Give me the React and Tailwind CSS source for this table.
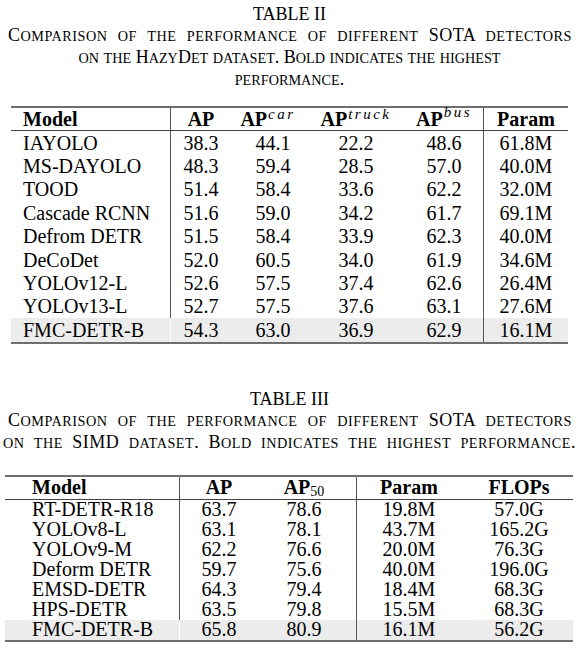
import React from "react";

function SC({ text }) {
  const parts = text.match(/([a-z]+|[^a-z]+)/g) || [];
  return (
    <>
      {parts.map((p, i) =>
        /^[a-z]+$/.test(p) ? (
          <span key={i} className="text-[0.79em]">{p.toUpperCase()}</span>
        ) : (
          <span key={i}>{p}</span>
        )
      )}
    </>
  );
}

const t2 = [
  ["IAYOLO", "38.3", "44.1", "22.2", "48.6", "61.8M"],
  ["MS-DAYOLO", "48.3", "59.4", "28.5", "57.0", "40.0M"],
  ["TOOD", "51.4", "58.4", "33.6", "62.2", "32.0M"],
  ["Cascade RCNN", "51.6", "59.0", "34.2", "61.7", "69.1M"],
  ["Defrom DETR", "51.5", "58.4", "33.9", "62.3", "40.0M"],
  ["DeCoDet", "52.0", "60.5", "34.0", "61.9", "34.6M"],
  ["YOLOv12-L", "52.6", "57.5", "37.4", "62.6", "26.4M"],
  ["YOLOv13-L", "52.7", "57.5", "37.6", "63.1", "27.6M"],
  ["FMC-DETR-B", "54.3", "63.0", "36.9", "62.9", "16.1M"],
];

const t3 = [
  ["RT-DETR-R18", "63.7", "78.6", "19.8M", "57.0G"],
  ["YOLOv8-L", "63.1", "78.1", "43.7M", "165.2G"],
  ["YOLOv9-M", "62.2", "76.6", "20.0M", "76.3G"],
  ["Deform DETR", "59.7", "75.6", "40.0M", "196.0G"],
  ["EMSD-DETR", "64.3", "79.4", "18.4M", "68.3G"],
  ["HPS-DETR", "63.5", "79.8", "15.5M", "68.3G"],
  ["FMC-DETR-B", "65.8", "80.9", "16.1M", "56.2G"],
];

function Sup({ children }) {
  return (
    <span className="relative top-[-7px] ml-[1px] text-[15px] tracking-[2.5px] italic font-normal leading-none">{children}</span>
  );
}

function Table2() {
  return (
    <div className="ml-[11px] w-[557px] text-[20px] leading-[20px]">
      <div className="h-[2px] bg-[#6e6e6e]" />
      <div className="flex h-[22px] items-center font-bold">
        <div className="w-[160px] h-full flex items-center pl-[12px] border-r border-[#555]">Model</div>
        <div className="w-[60px] text-center">AP</div>
        <div className="w-[84px] text-center pr-[10px]">AP<Sup>car</Sup></div>
        <div className="w-[82px] text-center">AP<Sup>truck</Sup></div>
        <div className="w-[87px] h-full flex items-center justify-center pl-[8px] border-r border-[#555]">AP<Sup>bus</Sup></div>
        <div className="w-[84px] text-center">Param</div>
      </div>
      <div className="h-[1px] bg-[#444]" />
      {t2.map((r, i) => {
        const last = i === t2.length - 1;
        return (
          <div key={i} className={"flex h-[23.4px] items-center " + (last ? "bg-[#ececec]" : "")}>
            <div className={"w-[160px] h-full flex items-center pl-[12px] border-r " + (last ? "border-white" : "border-[#555]")}>{r[0]}</div>
            <div className="w-[60px] text-center">{r[1]}</div>
            <div className="w-[84px] text-center">{r[2]}</div>
            <div className="w-[82px] text-center">{r[3]}</div>
            <div className="w-[87px] h-full flex items-center justify-center pl-[8px] border-r border-[#555]">{r[4]}</div>
            <div className="w-[84px] text-center">{r[5]}</div>
          </div>
        );
      })}
      <div className="h-[2px] bg-[#6e6e6e]" />
    </div>
  );
}

function Table3() {
  return (
    <div className="ml-[5px] w-[568px] text-[20px] leading-[19px]">
      <div className="h-[2px] bg-[#6e6e6e]" />
      <div className="flex h-[22px] items-center font-bold">
        <div className="w-[175px] h-full flex items-center pl-[27px] border-r border-[#555]">Model</div>
        <div className="w-[78px] text-center">AP</div>
        <div className="w-[99px] h-full flex items-center justify-center pr-[6px] border-r border-[#555]">
          AP<span className="relative top-[4px] text-[14px] font-normal leading-none">50</span>
        </div>
        <div className="w-[104px] text-center">Param</div>
        <div className="w-[112px] text-center pl-[4px]">FLOPs</div>
      </div>
      <div className="h-[1px] bg-[#444]" />
      {t3.map((r, i) => {
        const last = i === t3.length - 1;
        return (
          <div key={i} className={"flex h-[20px] items-center " + (last ? "bg-[#ececec]" : "")}>
            <div className={"w-[175px] h-full flex items-center pl-[27px] border-r " + (last ? "border-white" : "border-[#555]")}>{r[0]}</div>
            <div className="w-[78px] text-center">{r[1]}</div>
            <div className="w-[99px] h-full flex items-center justify-center pr-[6px] border-r border-[#555]">{r[2]}</div>
            <div className="w-[104px] text-center">{r[3]}</div>
            <div className="w-[112px] text-center pl-[4px]">{r[4]}</div>
          </div>
        );
      })}
      <div className="h-[2px] bg-[#6e6e6e]" />
    </div>
  );
}

export default function App() {
  return (
    <div className="w-[579px] h-[662px] bg-white text-black font-serif overflow-hidden">
      <div className="font-['Liberation_Serif',serif]">
        <div className="pt-[4px] text-center text-[18px] leading-[21px]">
          <div>TABLE II</div>
          <div className="ml-[8px] w-[564px] tracking-[0.5px] text-justify [text-align-last:justify]">
            <SC text="Comparison of the performance of different SOTA detectors" />
          </div>
          <div><SC text="on the Hazy" /><SC text="Det dataset. Bold indicates the highest" /></div>
          <div><SC text="performance." /></div>
        </div>
        <div className="mt-[15px]">
          <Table2 />
        </div>
        <div className="mt-[45px] text-center text-[18px] leading-[21px]">
          <div>TABLE III</div>
          <div className="ml-[8px] w-[564px] tracking-[0.5px] text-justify [text-align-last:justify]">
            <SC text="Comparison of the performance of different SOTA detectors" />
          </div>
          <div className="ml-[3px] w-[573px] tracking-[0.5px] text-justify [text-align-last:justify]">
            <SC text="on the SIMD dataset. Bold indicates the highest performance." />
          </div>
        </div>
        <div className="mt-[21px]">
          <Table3 />
        </div>
      </div>
    </div>
  );
}
